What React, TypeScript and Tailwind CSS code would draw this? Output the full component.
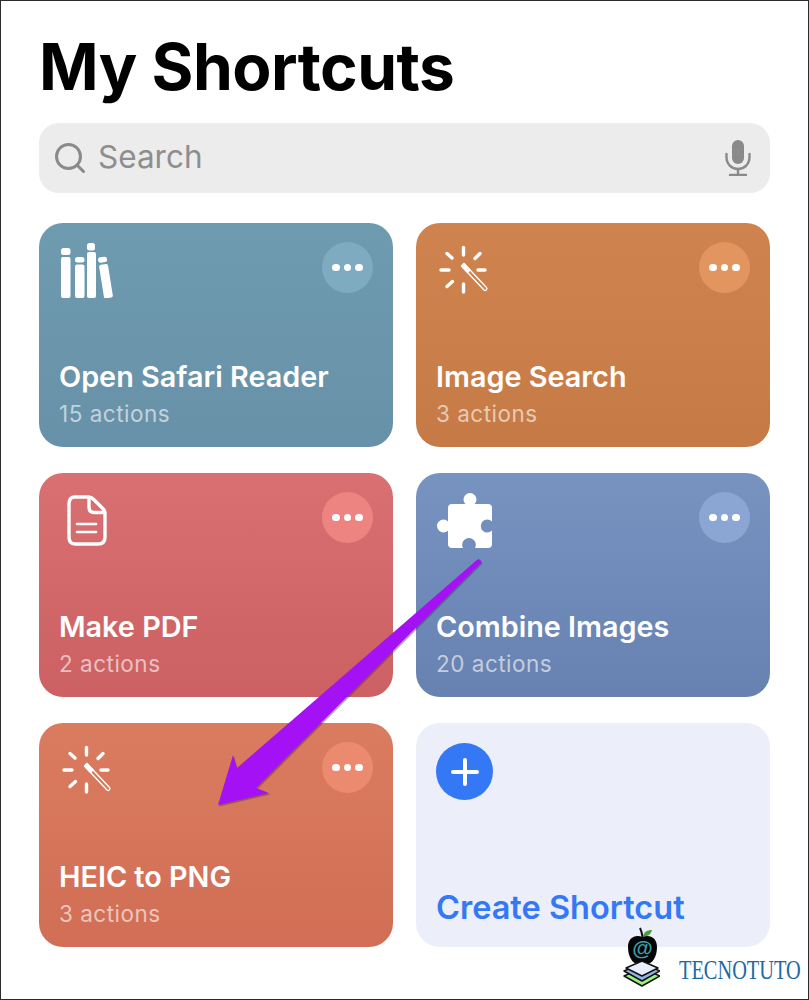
import { Search } from "lucide-react";
import type { ReactNode } from "react";

const BooksIcon = () => (
  <svg width="54" height="55" viewBox="0 0 54 55" fill="white">
    <rect x="0" y="5" width="9.500" height="7" rx="2.500" />
    <rect x="0" y="14" width="9.500" height="41" rx="2" />
    <rect x="14" y="14" width="9.500" height="5.500" rx="2.500" />
    <rect x="14" y="21.500" width="9.500" height="33.500" rx="2" />
    <rect x="26" y="0" width="8" height="7.500" rx="2.500" />
    <rect x="26" y="9" width="9" height="46" rx="2" />
    <g transform="rotate(-9 46 35)">
      <rect x="40" y="13.500" width="9" height="5.500" rx="2.500" />
      <rect x="40" y="21" width="9" height="34" rx="2" />
    </g>
  </svg>
);

const WandIcon = () => (
  <svg width="50" height="50" viewBox="0 0 50 50" fill="none" stroke="white" strokeLinecap="round">
    <g strokeWidth="3.400">
      <path d="M24.500 2.500V10" />
      <path d="M8 8.500L13 13" />
      <path d="M41 8.500L36 13.500" />
      <path d="M2 25H10" />
      <path d="M39 25H46" />
      <path d="M8 41.500L13.500 36.500" />
      <path d="M24.500 39V47" />
    </g>
    <path d="M22.500 21L25 18.500L47.500 42.500C49 44 46.500 46.500 45 45Z" strokeWidth="1.300" strokeLinejoin="round" />
    <path d="M22.500 21L25 18.500L31 25L28.500 27.500Z" fill="white" strokeWidth="1.300" strokeLinejoin="round" />
  </svg>
);

const DocIcon = () => (
  <svg width="40" height="51" viewBox="0 0 40 51" fill="none" stroke="white" strokeWidth="3.400" strokeLinecap="round" strokeLinejoin="round">
    <path d="M8 2H21.500C23.500 2 25 2.700 26.500 4.200L35.800 13.500C37.300 15 38 16.500 38 18.500V42C38 46.500 35.500 49 31 49H8C3.900 49 2 46.500 2 42V9C2 4.500 3.900 2 8 2Z" />
    <path d="M22 2.500V12C22 15.500 24 17.500 27 17.500H37.500" />
    <path d="M10 29H29" strokeWidth="2.600" />
    <path d="M10 37H29" strokeWidth="2.600" />
  </svg>
);

const PuzzleIcon = () => (
  <svg width="56" height="56" viewBox="0 0 56 56" fill="white">
    <circle cx="33" cy="6.500" r="6.500" />
    <circle cx="6.500" cy="33" r="6.500" />
    <path d="M15 11H51A4 4 0 0 1 55 15V28.500A6.500 6.500 0 1 0 55 37.500V51A4 4 0 0 1 51 55H38A6.800 6.800 0 1 0 26 55H15A4 4 0 0 1 11 51V15A4 4 0 0 1 15 11Z" />
  </svg>
);

const MicIcon = () => (
  <svg width="26" height="36" viewBox="0 0 26 36" fill="none" stroke="#8a8a8a" strokeWidth="2.400" strokeLinecap="round">
    <rect x="7" y="0" width="12" height="24" rx="6" fill="#8a8a8a" stroke="none" />
    <path d="M1.500 14V17C1.500 24 6.500 29 13 29C19.500 29 24.500 24 24.500 17V14" />
    <path d="M13 29V34" />
    <path d="M5 35H21" />
  </svg>
);

// pale disc with the three dots, top right of each card
function MoreButton({ tint }: { tint: string }) {
  return (
    <div className={`w-[51px] h-[51px] rounded-full flex items-center justify-center gap-[4px] ${tint}`}>
      <span className="w-[7.500px] h-[7.500px] rounded-full bg-white" />
      <span className="w-[7.500px] h-[7.500px] rounded-full bg-white" />
      <span className="w-[7.500px] h-[7.500px] rounded-full bg-white" />
    </div>
  );
}

interface CardProps {
  title: string;
  actions: string;
  icon: ReactNode;
  bg: string;
  tint: string;
  iconBox: string;
}

function ShortcutCard({ title, actions, icon, bg, tint, iconBox }: CardProps) {
  return (
    <div className={`h-[224px] rounded-[24px] flex flex-col pl-[20px] pr-[20px] pt-[19px] pb-[19px] ${bg}`}>
      <div className="flex justify-between items-start">
        <div className={iconBox}>{icon}</div>
        <MoreButton tint={tint} />
      </div>
      <div className="mt-auto">
        <div className="text-[28.800px] leading-[36px] font-semibold text-white">{title}</div>
        <div className="text-[22.500px] leading-[28px] mt-[5px] tracking-[0.5px] text-white/60">{actions}</div>
      </div>
    </div>
  );
}

function Arrow() {
  return (
    <svg className="absolute left-[200px] top-[545px] pointer-events-none" width="300" height="270" viewBox="200 545 300 270">
      <path
        d="M476.500 558.500C478 557.500 481 559.500 480 561.500L255 787L268 792L217 804L232 754L236 767Z"
        fill="#3a2a45"
        opacity="0.4"
        transform="translate(1 1.500)"
      />
      <path
        d="M476.500 558.500C478 557.500 481 559.500 480 561.500L255 787L268 792L217 804L232 754L236 767Z"
        fill="#a411f5"
      />
    </svg>
  );
}

function Watermark() {
  return (
    <div className="absolute left-[621px] top-[925px] w-[186px] h-[66px] flex items-start">
      <svg className="shrink-0" width="38" height="62" viewBox="0 0 38 62">
        <path d="M20.500 11C20 7 19.500 5 18 2" stroke="#111" strokeWidth="2" fill="none" />
        <path d="M21 10C22 6 25 4 30 4C29 8 26 11 21 10Z" fill="#4f9d3a" />
        <path d="M20.500 11C28 8 35 12 35 21C35 31 30 39 23.500 38C21.500 37.500 19.500 37.500 17.500 38C11 39 6 31 6 21C6 12 13 8 20.500 11Z" fill="#050505" />
        <text x="20.500" y="29" textAnchor="middle" fontSize="21" fontWeight="700" fill="#3d9aa8" fontFamily="Liberation Sans, sans-serif">@</text>
        <path d="M2 50L20 42L38 50L20 60Z" fill="#9cf07e" stroke="#111" strokeWidth="1.500" strokeLinejoin="round" />
        <path d="M2 45L20 37L38 45L20 55Z" fill="#8ab8ea" stroke="#111" strokeWidth="1.500" strokeLinejoin="round" />
        <path d="M4 42L20 35L36 42L20 50Z" fill="#e6eefb" stroke="#111" strokeWidth="1.500" strokeLinejoin="round" />
      </svg>
      <span className="ml-[19px] mt-[29px] text-[27px] leading-[30px] text-[#1f6aa3] origin-left scale-x-[0.754] font-['Liberation_Serif',serif] whitespace-nowrap">
        TECNOTUTO
      </span>
    </div>
  );
}

export default function App() {
  return (
    <div className="relative w-[809px] h-[1000px] overflow-hidden bg-white border border-[#2b2b2b] px-[38px] font-['Inter',sans-serif]">
      <h1 className="mt-[28px] text-[64px] leading-[76px] font-bold tracking-[-0.5px] text-black">My Shortcuts</h1>

      <div className="mt-[18px] h-[70px] rounded-[20px] bg-[#ececec] flex items-center pl-[13px] pr-[19px]">
        <Search className="w-[36px] h-[36px] text-[#8a8a8a]" strokeWidth={2} />
        <span className="ml-[10px] -mt-[3px] text-[31.500px] text-[#8e8e8e]">Search</span>
        <div className="ml-auto flex">
          <MicIcon />
        </div>
      </div>

      <div className="mt-[30px] grid grid-cols-2 gap-x-[23px] gap-y-[26px]">
        <ShortcutCard
          title="Open Safari Reader"
          actions="15 actions"
          icon={<BooksIcon />}
          bg="bg-gradient-to-b from-[#6f9bb0] to-[#6791a8]"
          tint="bg-[#7fabc0]"
          iconBox="mt-[1px] ml-[2px]"
        />
        <ShortcutCard
          title="Image Search"
          actions="3 actions"
          icon={<WandIcon />}
          bg="bg-gradient-to-b from-[#cf844f] to-[#c67a45]"
          tint="bg-[#e2955f]"
          iconBox="mt-[3px] ml-[3px]"
        />
        <ShortcutCard
          title="Make PDF"
          actions="2 actions"
          icon={<DocIcon />}
          bg="bg-gradient-to-b from-[#d97072] to-[#cc6062]"
          tint="bg-[#ee8481]"
          iconBox="mt-[3px] ml-[8px]"
        />
        <ShortcutCard
          title="Combine Images"
          actions="20 actions"
          icon={<PuzzleIcon />}
          bg="bg-gradient-to-b from-[#7793c0] to-[#6782b1]"
          tint="bg-[#8ba6d3]"
          iconBox="ml-[1px] mt-[1px]"
        />
        <ShortcutCard
          title="HEIC to PNG"
          actions="3 actions"
          icon={<WandIcon />}
          bg="bg-gradient-to-b from-[#da7c60] to-[#d16e55]"
          tint="bg-[#ec8a70]"
          iconBox="mt-[3px] ml-[3px]"
        />
        <div className="h-[224px] rounded-[24px] bg-[#eceff9] flex flex-col pl-[20px] pt-[20px] pb-[17px]">
          <div className="w-[57px] h-[57px] rounded-full bg-[#3478f6] flex items-center justify-center">
            <svg width="30" height="30" viewBox="0 0 30 30" stroke="white" strokeWidth="4" strokeLinecap="round">
              <path d="M15 3V27" />
              <path d="M3 15H27" />
            </svg>
          </div>
          <div className="mt-auto text-[32.500px] leading-[44px] font-semibold text-[#3478f6]">Create Shortcut</div>
        </div>
      </div>

      <Arrow />
      <Watermark />
    </div>
  );
}
